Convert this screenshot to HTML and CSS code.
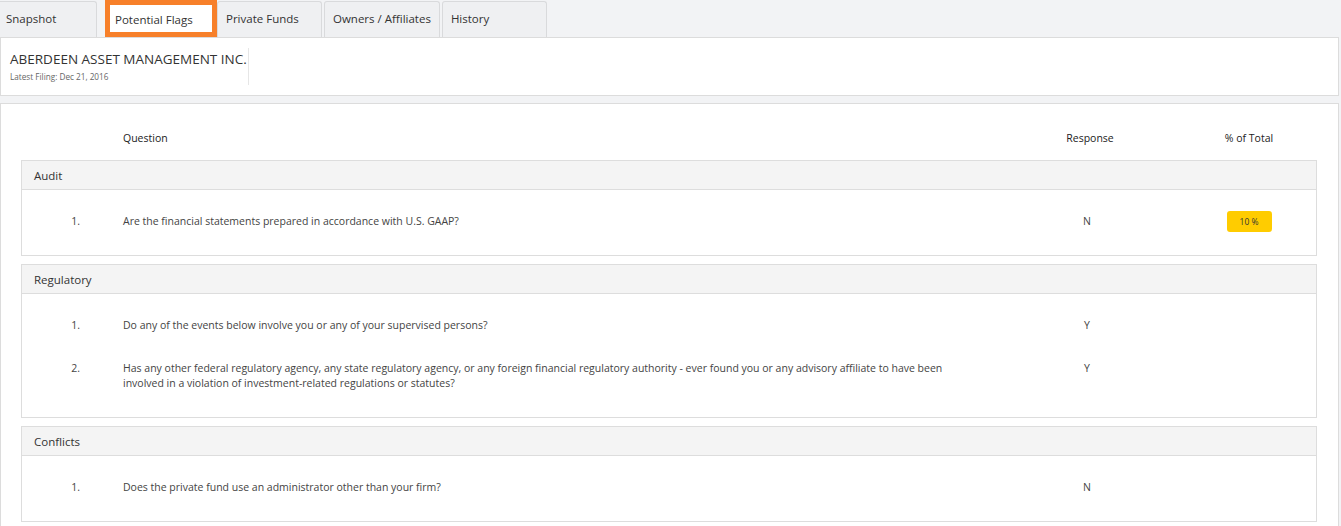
FILE: index.html
```html
<!DOCTYPE html>
<html lang="en">
<head>
    <meta charset="UTF-8">
    <meta name="viewport" content="width=device-width, initial-scale=1.0">
    <title>Potential Flags</title>
    <link rel="stylesheet" href="styles.css">
</head>
<body>
    <div class="tabs">
        <div class="tab tab-first">Snapshot</div>
        <div class="tab active">Potential Flags</div>
        <div class="tab">Private Funds</div>
        <div class="tab">Owners / Affiliates</div>
        <div class="tab">History</div>
    </div>

    <div class="firm-card">
        <div class="firm-info">
            <div class="firm-name">ABERDEEN ASSET MANAGEMENT INC.</div>
            <div class="firm-filing">Latest Filing: Dec 21, 2016</div>
        </div>
    </div>

    <div class="flags-card">
        <div class="flags-head row">
            <div></div>
            <div>Question</div>
            <div class="col-center head-resp">Response</div>
            <div class="col-center">% of Total</div>
        </div>

        <div class="section">
            <div class="section-title">Audit</div>
            <div class="section-body">
                <div class="row">
                    <div class="num">1.</div>
                    <div>Are the financial statements prepared in accordance with U.S. GAAP?</div>
                    <div class="col-center">N</div>
                    <div class="col-center"><span class="badge">10 %</span></div>
                </div>
            </div>
        </div>

        <div class="section">
            <div class="section-title">Regulatory</div>
            <div class="section-body">
                <div class="row">
                    <div class="num">1.</div>
                    <div>Do any of the events below involve you or any of your supervised persons?</div>
                    <div class="col-center">Y</div>
                    <div></div>
                </div>
                <div class="row">
                    <div class="num">2.</div>
                    <div>Has any other federal regulatory agency, any state regulatory agency, or any foreign financial regulatory authority - ever found you or any advisory affiliate to have been involved in a violation of investment-related regulations or statutes?</div>
                    <div class="col-center">Y</div>
                    <div></div>
                </div>
            </div>
        </div>

        <div class="section">
            <div class="section-title">Conflicts</div>
            <div class="section-body">
                <div class="row">
                    <div class="num">1.</div>
                    <div>Does the private fund use an administrator other than your firm?</div>
                    <div class="col-center">N</div>
                    <div></div>
                </div>
            </div>
        </div>
    </div>
</body>
</html>
```

FILE: styles.css
```css
* {
    margin: 0;
    padding: 0;
    box-sizing: border-box;
}
body {
    font-family: "Open Sans", Arial, sans-serif;
    background-color: #f2f3f5;
    color: #333;
    width: 1339px;
}
.tabs {
    display: flex;
    gap: 2px;
    height: 37px;
    padding-top: 1px;
}
.tab {
    height: 36px;
    min-width: 105px;
    padding: 0 8px;
    border: 1px solid #d9dadc;
    border-bottom: none;
    border-radius: 3px 3px 0 0;
    background-color: #eff0f2;
    font-size: 11.5px;
    line-height: 34px;
    color: #333;
}
.tab-first {
    min-width: 97px;
    padding-left: 6px;
    border-left: none;
    border-radius: 0 3px 0 0;
}
.tab.active {
    height: 37px;
    margin-top: -1px;
    margin-left: 6px;
    margin-right: -2px;
    min-width: 112px;
    padding: 0 5px;
    border: 5px solid #f7802a;
    border-radius: 0;
    background-color: #fff;
    line-height: 29px;
}
.firm-card {
    background-color: #fff;
    border: 1px solid #dcdcdc;
    padding: 10px 9px 9px;
    height: 59px;
}
.firm-info {
    display: inline-block;
    border-right: 1px solid #e6e6e6;
    padding-right: 1px;
    padding-bottom: 1px;
}
.firm-name {
    font-size: 13.5px;
    line-height: 22px;
    color: #333;
}
.firm-filing {
    font-size: 8.2px;
    line-height: 14px;
    color: #666;
}
.flags-card {
    margin-top: 7px;
    background-color: #fff;
    border: 1px solid #dcdcdc;
    padding: 21px 21px 8px 20px;
}
.row {
    display: grid;
    grid-template-columns: 101px 840px 248px 76px;
    font-size: 10.5px;
    line-height: 15px;
    color: #444;
    padding: 14px 0;
}
.flags-head {
    padding: 6px 0 6px 1px;
    margin-bottom: 8px;
    color: #222;
}
.head-resp {
    padding-left: 6px;
}
.col-center {
    text-align: center;
}
.num {
    text-align: right;
    padding-right: 43px;
}
.section {
    border: 1px solid #dddddd;
    margin-bottom: 8px;
}
.section-title {
    background-color: #f4f4f4;
    border-bottom: 1px solid #dddddd;
    height: 29px;
    padding-left: 12px;
    font-size: 11.5px;
    line-height: 29px;
    color: #333;
}
.section-body {
    padding: 10px 0 12px;
}
.badge {
    display: inline-block;
    width: 45px;
    height: 21px;
    margin: -3px 0;
    background-color: #ffcc00;
    border-radius: 3px;
    font-size: 8.5px;
    line-height: 21px;
    color: #333;
    vertical-align: top;
}
```
